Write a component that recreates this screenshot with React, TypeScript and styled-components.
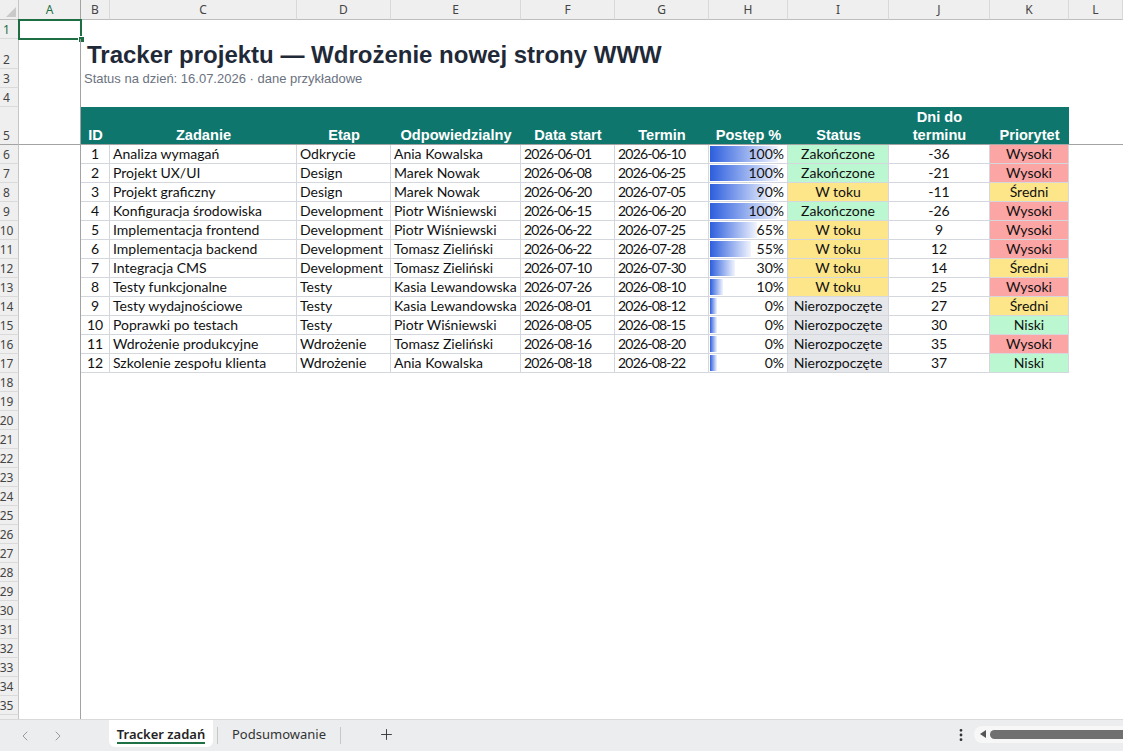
import React from 'react'
import styled, { createGlobalStyle } from 'styled-components'
import { ChevronLeft, ChevronRight, Plus, EllipsisVertical } from 'lucide-react'

const COLS = '19px 62px 29px 187px 94px 130px 94px 94px 79px 101px 101px 79px 1fr'
const LETTERS = ['A', 'B', 'C', 'D', 'E', 'F', 'G', 'H', 'I', 'J', 'K', 'L']
const FROZEN = '#a3a3a3'
const CELL_LINE = '#d4d7dd'

const GlobalStyle = createGlobalStyle`
    html, body {
        margin: 0;
        padding: 0;
        background: #ffffff;
        overflow: hidden;
    }
`

const Frame = styled.div`
    width: 1123px;
    height: 751px;
    display: flex;
    flex-direction: column;
    overflow: hidden;
    background: #ffffff;
`

const Sheet = styled.div`
    flex: 1;
    overflow: hidden;
`

const GridRow = styled.div<{ $h: number }>`
    display: grid;
    grid-template-columns: ${COLS};
    height: ${(p) => p.$h}px;
`

const Corner = styled.div`
    position: relative;
    background: #efefef;
    border-right: 1px solid #c6c6c6;
    border-bottom: 1px solid #bdbdbd;
    &::after {
        content: '';
        position: absolute;
        right: 2px;
        bottom: 2px;
        border-left: 10px solid transparent;
        border-bottom: 10px solid #c9c9c9;
    }
`

const ColHead = styled.div<{ $active?: boolean; $frozen?: boolean }>`
    background: #efefef;
    border-right: 1px solid ${(p) => (p.$frozen ? FROZEN : '#d9d9d9')};
    border-bottom: 1px solid #bdbdbd;
    color: ${(p) => (p.$active ? '#1e7145' : '#444444')};
    font-family: 'Noto Sans', 'Open Sans', sans-serif;
    font-size: 12px;
    line-height: 19px;
    text-align: center;
`

const RowHead = styled.div<{ $active?: boolean; $frozen?: boolean }>`
    background: #efefef;
    border-right: 1px solid #c6c6c6;
    border-bottom: 1px solid ${(p) => (p.$frozen ? FROZEN : '#dadada')};
    color: ${(p) => (p.$active ? '#1e7145' : '#444444')};
    font-family: 'Noto Sans', 'Open Sans', sans-serif;
    font-size: 12px;
    line-height: 17px;
    display: flex;
    align-items: flex-end;
    justify-content: center;
    padding-right: 5px;
    box-sizing: border-box;
    white-space: nowrap;
`

const ACell = styled.div<{ $frozen?: boolean; $selected?: boolean }>`
    position: relative;
    border-right: 1px solid ${FROZEN};
    border-bottom: ${(p) => (p.$frozen ? `1px solid ${FROZEN}` : 'none')};
    box-sizing: border-box;
    ${(p) =>
        p.$selected &&
        `
        &::before {
            content: '';
            position: absolute;
            left: -1px;
            top: -1px;
            right: -2px;
            bottom: -1px;
            border: 2px solid #1e6e43;
        }
    `}
`

const FillHandle = styled.span`
    position: absolute;
    right: -5px;
    bottom: -4px;
    width: 5px;
    height: 5px;
    background: #1e6e43;
    border: 1px solid #ffffff;
`

const Blank = styled.div<{ $frozen?: boolean }>`
    grid-column: 3 / -1;
    border-bottom: ${(p) => (p.$frozen ? `1px solid ${FROZEN}` : 'none')};
`

const Title = styled.div`
    grid-column: 3 / -1;
    display: flex;
    align-items: flex-end;
    padding-left: 6px;
    font-family: 'Liberation Sans', Arial, sans-serif;
    font-weight: bold;
    font-size: 24px;
    line-height: 28px;
    color: #1f2937;
    white-space: nowrap;
`

const Subtitle = styled.div`
    grid-column: 3 / -1;
    padding-left: 3px;
    font-family: 'Liberation Sans', Arial, sans-serif;
    font-size: 13px;
    line-height: 19px;
    color: #6b7280;
    white-space: nowrap;
`

const HeadCell = styled.div`
    background: #0f766e;
    border-bottom: 1px solid ${FROZEN};
    display: flex;
    align-items: flex-end;
    justify-content: center;
    text-align: center;
    color: #ffffff;
    font-family: 'Liberation Sans', Arial, sans-serif;
    font-weight: bold;
    font-size: 14.6px;
    line-height: 18px;
    white-space: pre-line;
`

const Cell = styled.div<{ $align?: 'left' | 'center' | 'right'; $bg?: string; $num?: boolean }>`
    position: relative;
    border-right: 1px solid ${CELL_LINE};
    border-bottom: 1px solid ${CELL_LINE};
    background: ${(p) => p.$bg || '#ffffff'};
    box-sizing: border-box;
    padding: 0 3px;
    text-align: ${(p) => p.$align || 'left'};
    font-family: Lato, 'Open Sans', sans-serif;
    font-size: 14px;
    line-height: 18px;
    letter-spacing: ${(p) => (p.$num ? '-0.8px' : 'normal')};
    color: #111111;
    white-space: nowrap;
    overflow: hidden;
`

const BarText = styled.span`
    position: relative;
`

const Bar = styled.span`
    position: absolute;
    left: 1px;
    top: 1px;
    bottom: 1px;
    background: linear-gradient(90deg, #2c5edd 0%, #f2f5fe 100%);
`

const TabBar = styled.div`
    height: 32px;
    flex-shrink: 0;
    display: flex;
    align-items: stretch;
    background: #ebedef;
    border-top: 1px solid #d9d9d9;
    box-sizing: border-box;
    font-family: 'Noto Sans', 'Open Sans', sans-serif;
    font-size: 13px;
    color: #333333;
`

const NavGroup = styled.div`
    width: 109px;
    padding-left: 8px;
    box-sizing: border-box;
    display: flex;
    align-items: center;
`

const NavButton = styled.span`
    width: 33px;
    display: flex;
    justify-content: center;
    color: #9a9a9a;
`

const ActiveTab = styled.div`
    position: relative;
    width: 104px;
    margin-bottom: 4px;
    background: #ffffff;
    border-radius: 0 0 6px 6px;
    display: flex;
    align-items: center;
    justify-content: center;
    font-weight: 600;
    color: #242424;
    &::after {
        content: '';
        position: absolute;
        left: 8px;
        right: 8px;
        bottom: 3px;
        height: 2px;
        background: #1e7145;
    }
`

const TabSep = styled.span<{ $ml: number }>`
    width: 1px;
    height: 17px;
    align-self: center;
    margin-left: ${(p) => p.$ml}px;
    background: #c8c8c8;
`

const Tab = styled.div`
    padding: 0 14px 3px;
    display: flex;
    align-items: center;
`

const AddButton = styled.span`
    margin-left: 37px;
    display: flex;
    align-items: center;
    padding-bottom: 3px;
    color: #333333;
`

const Spacer = styled.div`
    flex: 1;
`

const MoreButton = styled.span`
    display: flex;
    align-items: center;
    margin-right: 5px;
    padding-bottom: 2px;
    color: #333333;
`

const ScrollTrack = styled.div`
    width: 149px;
    height: 17px;
    align-self: center;
    margin-bottom: 3px;
    display: flex;
    align-items: center;
    background: #f7f7f7;
    border-radius: 8px 0 0 8px;
    padding-left: 6px;
    box-sizing: border-box;
`

const ScrollArrow = styled.span`
    width: 0;
    height: 0;
    border-top: 4px solid transparent;
    border-bottom: 4px solid transparent;
    border-right: 6px solid #555555;
`

const ScrollThumb = styled.span`
    flex: 1;
    height: 9px;
    margin-left: 4px;
    background: #707070;
    border-radius: 5px 0 0 5px;
`

const STATUS_BG: Record<string, string> = {
    'Zakończone': '#bbf7d0',
    'W toku': '#fde68a',
    'Nierozpoczęte': '#e5e7eb',
}

const PRIORITY_BG: Record<string, string> = {
    Wysoki: '#fca5a5',
    'Średni': '#fde68a',
    Niski: '#bbf7d0',
}

type Task = [number, string, string, string, string, string, number, string, number, string]

const TASKS: Task[] = [
    [1, 'Analiza wymagań', 'Odkrycie', 'Ania Kowalska', '2026-06-01', '2026-06-10', 100, 'Zakończone', -36, 'Wysoki'],
    [2, 'Projekt UX/UI', 'Design', 'Marek Nowak', '2026-06-08', '2026-06-25', 100, 'Zakończone', -21, 'Wysoki'],
    [3, 'Projekt graficzny', 'Design', 'Marek Nowak', '2026-06-20', '2026-07-05', 90, 'W toku', -11, 'Średni'],
    [4, 'Konfiguracja środowiska', 'Development', 'Piotr Wiśniewski', '2026-06-15', '2026-06-20', 100, 'Zakończone', -26, 'Wysoki'],
    [5, 'Implementacja frontend', 'Development', 'Piotr Wiśniewski', '2026-06-22', '2026-07-25', 65, 'W toku', 9, 'Wysoki'],
    [6, 'Implementacja backend', 'Development', 'Tomasz Zieliński', '2026-06-22', '2026-07-28', 55, 'W toku', 12, 'Wysoki'],
    [7, 'Integracja CMS', 'Development', 'Tomasz Zieliński', '2026-07-10', '2026-07-30', 30, 'W toku', 14, 'Średni'],
    [8, 'Testy funkcjonalne', 'Testy', 'Kasia Lewandowska', '2026-07-26', '2026-08-10', 10, 'W toku', 25, 'Wysoki'],
    [9, 'Testy wydajnościowe', 'Testy', 'Kasia Lewandowska', '2026-08-01', '2026-08-12', 0, 'Nierozpoczęte', 27, 'Średni'],
    [10, 'Poprawki po testach', 'Testy', 'Piotr Wiśniewski', '2026-08-05', '2026-08-15', 0, 'Nierozpoczęte', 30, 'Niski'],
    [11, 'Wdrożenie produkcyjne', 'Wdrożenie', 'Tomasz Zieliński', '2026-08-16', '2026-08-20', 0, 'Nierozpoczęte', 35, 'Wysoki'],
    [12, 'Szkolenie zespołu klienta', 'Wdrożenie', 'Ania Kowalska', '2026-08-18', '2026-08-22', 0, 'Nierozpoczęte', 37, 'Niski'],
]

const HEADERS = ['ID', 'Zadanie', 'Etap', 'Odpowiedzialny', 'Data start', 'Termin', 'Postęp %', 'Status', 'Dni do\nterminu', 'Priorytet']

const BlankRow = ({ n }: { n?: number }) => (
    <GridRow $h={19}>
        <RowHead>{n}</RowHead>
        <ACell />
        <Blank />
    </GridRow>
)

const TaskRow = ({ task, n }: { task: Task; n: number }) => {
    const [id, name, stage, owner, start, due, progress, status, days, priority] = task
    return (
        <GridRow $h={19}>
            <RowHead>{n}</RowHead>
            <ACell />
            <Cell $align="center">{id}</Cell>
            <Cell>{name}</Cell>
            <Cell>{stage}</Cell>
            <Cell>{owner}</Cell>
            <Cell $num>{start}</Cell>
            <Cell $num>{due}</Cell>
            <Cell $align="right">
                <Bar style={{ width: 7 + (61 * progress) / 100 }} />
                <BarText>{progress}%</BarText>
            </Cell>
            <Cell $align="center" $bg={STATUS_BG[status]}>{status}</Cell>
            <Cell $align="center">{days}</Cell>
            <Cell $align="center" $bg={PRIORITY_BG[priority]}>{priority}</Cell>
            <div />
        </GridRow>
    )
}

const App = () => {
    const blanks: number[] = []
    for (let n = 18; n <= 35; n++) blanks.push(n)

    return (
        <Frame>
            <GlobalStyle />
            <Sheet>
                <GridRow $h={20}>
                    <Corner />
                    {LETTERS.map((l) => (
                        <ColHead key={l} $active={l === 'A'} $frozen={l === 'A'}>
                            {l}
                        </ColHead>
                    ))}
                </GridRow>
                <GridRow $h={19}>
                    <RowHead $active>1</RowHead>
                    <ACell $selected>
                        <FillHandle />
                    </ACell>
                    <Blank />
                </GridRow>
                <GridRow $h={30}>
                    <RowHead>2</RowHead>
                    <ACell />
                    <Title>Tracker projektu — Wdrożenie nowej strony WWW</Title>
                </GridRow>
                <GridRow $h={19}>
                    <RowHead>3</RowHead>
                    <ACell />
                    <Subtitle>Status na dzień: 16.07.2026 · dane przykładowe</Subtitle>
                </GridRow>
                <BlankRow n={4} />
                <GridRow $h={38}>
                    <RowHead $frozen>5</RowHead>
                    <ACell $frozen />
                    {HEADERS.map((h) => (
                        <HeadCell key={h}>{h}</HeadCell>
                    ))}
                    <Blank $frozen style={{ gridColumn: 'auto' }} />
                </GridRow>
                {TASKS.map((t, i) => (
                    <TaskRow key={t[0]} task={t} n={i + 6} />
                ))}
                {blanks.map((n) => (
                    <BlankRow key={n} n={n} />
                ))}
                <BlankRow />
            </Sheet>
            <TabBar>
                <NavGroup>
                    <NavButton>
                        <ChevronLeft size={16} strokeWidth={1.5} />
                    </NavButton>
                    <NavButton>
                        <ChevronRight size={16} strokeWidth={1.5} />
                    </NavButton>
                </NavGroup>
                <ActiveTab>Tracker zadań</ActiveTab>
                <TabSep $ml={4} />
                <Tab>Podsumowanie</Tab>
                <TabSep $ml={0} />
                <AddButton>
                    <Plus size={17} strokeWidth={1.3} />
                </AddButton>
                <Spacer />
                <MoreButton>
                    <EllipsisVertical size={16} strokeWidth={2.2} />
                </MoreButton>
                <ScrollTrack>
                    <ScrollArrow />
                    <ScrollThumb />
                </ScrollTrack>
            </TabBar>
        </Frame>
    )
}

export default App
